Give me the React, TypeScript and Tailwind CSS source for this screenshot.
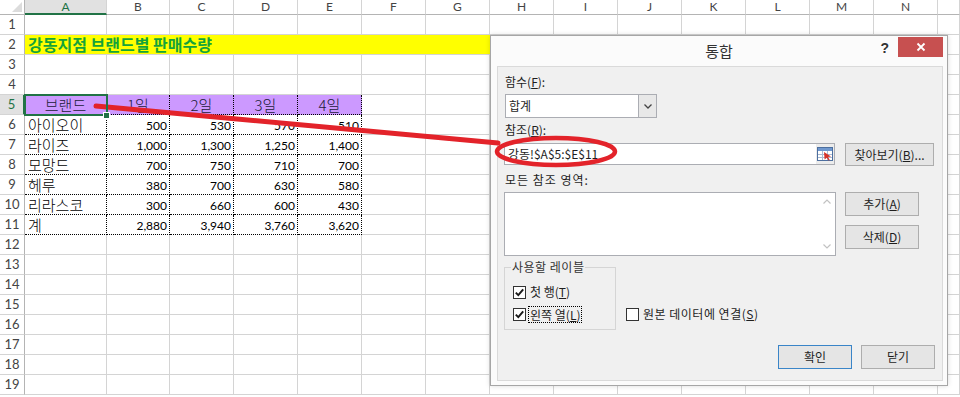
import React from 'react';

const colLetters = ['A', 'B', 'C', 'D', 'E', 'F', 'G', 'H', 'I', 'J', 'K', 'L', 'M', 'N', ''];

const data: string[][] = [
  ['아이오이', '500', '530', '570', '510'],
  ['라이즈', '1,000', '1,300', '1,250', '1,400'],
  ['모망드', '700', '750', '710', '700'],
  ['헤루', '380', '700', '630', '580'],
  ['리라스코', '300', '660', '600', '430'],
  ['계', '2,880', '3,940', '3,760', '3,620'],
];

const grid = 'border-r border-b border-[#d4d4d4]';
const dotted = 'border-r border-b border-dotted border-black';

const RowHead = ({ n, active }: { n: number; active?: boolean }) =>
  active ? (
    <div className="border-b border-[#d4d4d4] border-r-2 border-r-[#217346] bg-[#e1e1e1] text-[#217346] text-[13px] flex items-center justify-center">
      {n}
    </div>
  ) : (
    <div className="border-b border-[#d4d4d4] border-r border-r-[#b4b4b4] text-[#444] text-[13px] flex items-center justify-center">
      {n}
    </div>
  );

const Blanks = ({ count }: { count: number }) => (
  <>
    {Array.from({ length: count }).map((_, i) => (
      <div key={i} className={grid} />
    ))}
  </>
);

const Check = ({ on }: { on?: boolean }) => (
  <span className="w-[13px] h-[13px] border border-[#333] bg-white flex items-center justify-center shrink-0">
    {on && (
      <svg width="11" height="11" viewBox="0 0 11 11">
        <path d="M1.8 5.6 L4.3 8.2 L9.2 2.4" fill="none" stroke="#1a1a1a" strokeWidth="1.9" />
      </svg>
    )}
  </span>
);

const Btn = ({ children, primary }: { children: React.ReactNode; primary?: boolean }) => (
  <div
    className={
      primary
        ? 'w-[74px] h-[24px] border border-[#3a85c8] bg-[#e5e5e5] flex items-center justify-center text-[12px] text-[#1e1e1e]'
        : 'w-[74px] h-[24px] border border-[#adadad] bg-[#e5e5e5] flex items-center justify-center text-[12px] text-[#1e1e1e]'
    }
  >
    {children}
  </div>
);

const Sheet = () => (
  <div className="grid grid-cols-[25px_82px_63px_64px_64px_64px_64px_64px_64px_64px_64px_64px_64px_64px_64px_22px] grid-rows-[15px_repeat(19,20px)] font-['Lato','Noto_Sans_CJK_KR',sans-serif]">
    {/* header row */}
    <div className="border-r border-b border-[#b4b4b4] flex items-end justify-end p-[2px]">
      <svg width="10" height="10" viewBox="0 0 10 10">
        <polygon points="10,0 10,10 0,10" fill="#dcdcdc" />
      </svg>
    </div>
    {colLetters.map((c, i) =>
      i === 0 ? (
        <div key={c} className="border-r border-[#d4d4d4] border-b-2 border-b-[#217346] bg-[#e1e1e1] text-[#217346] text-[12px] flex items-center justify-center leading-[13px]">
          {c}
        </div>
      ) : (
        <div key={i} className="border-r border-[#d4d4d4] border-b border-b-[#b4b4b4] text-[#444] text-[12px] flex items-center justify-center leading-[14px]">
          {c}
        </div>
      )
    )}

    {/* row 1 */}
    <RowHead n={1} />
    <Blanks count={15} />

    {/* row 2 */}
    <RowHead n={2} />
    <div className="col-span-7 bg-[#ffff00] border-b border-[#d4d4d4] flex items-end pl-[3px] font-['Noto_Sans_CJK_KR',sans-serif] font-bold text-[16px] leading-[19px] text-[#14a33a] whitespace-nowrap">
      강동지점 브랜드별 판매수량
    </div>
    <Blanks count={8} />

    <RowHead n={3} />
    <Blanks count={15} />
    <RowHead n={4} />
    <Blanks count={15} />

    {/* row 5 */}
    <RowHead n={5} active />
    <div className={`${dotted} relative bg-[#cc99ff] flex items-end justify-center font-['Noto_Sans_CJK_KR',sans-serif] font-light text-[15px] leading-[18px] text-[#1b1b3a]`}>
      브랜드
      <div className="absolute left-[-1px] top-[-1px] w-[84px] h-[22px] border-2 border-[#217346] z-10" />
      <div className="absolute right-[-4px] bottom-[-5px] w-[7px] h-[7px] bg-[#217346] border border-white z-10" />
    </div>
    {['1일', '2일', '3일', '4일'].map((d) => (
      <div key={d} className={`${dotted} bg-[#cc99ff] flex items-end justify-center font-['Noto_Sans_CJK_KR',sans-serif] font-light text-[15px] leading-[18px] text-[#1b1b3a]`}>
        {d}
      </div>
    ))}
    <Blanks count={10} />

    {/* rows 6-11 */}
    {data.map((r, i) => (
      <React.Fragment key={r[0]}>
        <RowHead n={6 + i} />
        <div className={`${dotted} flex items-end pl-[3px] font-['Noto_Sans_CJK_KR',sans-serif] font-light text-[15px] leading-[18px] text-black whitespace-nowrap`}>
          {r[0]}
        </div>
        {r.slice(1).map((v, j) => (
          <div key={j} className={`${dotted} flex items-end justify-end pr-[2px] text-[12px] leading-[17px] text-black`}>
            {v}
          </div>
        ))}
        <Blanks count={10} />
      </React.Fragment>
    ))}

    {[12, 13, 14, 15, 16, 17, 18, 19].map((n) => (
      <React.Fragment key={n}>
        <RowHead n={n} />
        <Blanks count={15} />
      </React.Fragment>
    ))}
  </div>
);

const RefIcon = () => (
  <svg width="16" height="14" viewBox="0 0 16 14">
    <rect x="0.5" y="0.5" width="15" height="13" fill="#ffffff" stroke="#4d6f9f" />
    <rect x="1" y="1" width="14" height="3" fill="#7098cf" />
    <line x1="1" y1="7.5" x2="15" y2="7.5" stroke="#a9bbd4" />
    <line x1="1" y1="10.5" x2="15" y2="10.5" stroke="#a9bbd4" />
    <line x1="5.5" y1="4" x2="5.5" y2="13" stroke="#a9bbd4" />
    <line x1="10.5" y1="4" x2="10.5" y2="13" stroke="#a9bbd4" />
    <polygon points="7,5 14,9.5 11,10 12.8,13 11.6,13.6 9.8,10.7 7.6,12.5" fill="#d6332a" />
  </svg>
);

const Dialog = () => (
  <div className="absolute left-[490px] top-[35px] w-[458px] h-[351px] border border-[#a6a6a6] bg-[#fbfbfb] flex flex-col shadow-[0_0_5px_rgba(0,0,0,0.15)] font-['Noto_Sans_CJK_KR',sans-serif] text-[#1e1e1e]">
    <div className="h-[30px] grid grid-cols-[1fr_auto_1fr]">
      <div />
      <div className="flex items-center text-[15px] text-[#333]">통합</div>
      <div className="flex justify-end items-start pr-[4px] pt-[1px] gap-[9px]">
        <span className="mt-[1px] text-[14px] font-bold text-[#333] font-['Liberation_Sans',sans-serif]">?</span>
        <div className="w-[45px] h-[20px] bg-[#c75050] flex items-center justify-center">
          <svg width="10" height="10" viewBox="0 0 10 10">
            <path d="M1.5 1.5 L8.5 8.5 M8.5 1.5 L1.5 8.5" stroke="#ffffff" strokeWidth="1.8" />
          </svg>
        </div>
      </div>
    </div>

    <div className="flex-1 ml-[6px] mr-[4px] mb-[4px] bg-[#f0f0f0] border border-[#dadada] flex flex-col text-[12px]">
      <div className="ml-[7px] mt-[7px] leading-[16px]">
        함수(<span className="underline">F</span>):
      </div>
      <div className="ml-[7px] mt-[4px] w-[152px] h-[24px] border border-[#abadb3] bg-white flex">
        <div className="flex-1 flex items-center pl-[3px]">합계</div>
        <div className="w-[18px] border-l border-[#abadb3] bg-[#e8e8e8] flex items-center justify-center">
          <svg width="8" height="5" viewBox="0 0 8 5">
            <path d="M0.5 0.5 L4 4 L7.5 0.5" fill="none" stroke="#444" strokeWidth="1.3" />
          </svg>
        </div>
      </div>

      <div className="ml-[7px] mt-[4px] leading-[16px]">
        참조(<span className="underline">R</span>):
      </div>
      <div className="ml-[6px] mt-[5px] flex items-start">
        <div className="w-[331px] h-[22px] border border-[#abadb3] bg-white flex">
          <div className="flex-1 flex items-center pl-[3px]">강동!$A$5:$E$11</div>
          <div className="w-[18px] bg-[#ececec] flex items-center justify-center">
            <RefIcon />
          </div>
        </div>
        <div className="ml-[10px] w-[89px] h-[23px] border border-[#adadad] bg-[#e5e5e5] flex items-center justify-center">
          찾아보기(<span className="underline">B</span>)...
        </div>
      </div>

      <div className="ml-[7px] mt-[6px] leading-[16px] tracking-[1px]">모든 참조 영역:</div>
      <div className="ml-[6px] mt-[4px] flex items-start">
        <div className="w-[332px] h-[64px] border border-[#abadb3] bg-white flex justify-end">
          <div className="w-[17px] flex flex-col justify-between items-center py-[6px]">
            <svg width="8" height="5" viewBox="0 0 8 5">
              <path d="M0.5 4.5 L4 1 L7.5 4.5" fill="none" stroke="#c2c2c2" strokeWidth="1.2" />
            </svg>
            <svg width="8" height="5" viewBox="0 0 8 5">
              <path d="M0.5 0.5 L4 4 L7.5 0.5" fill="none" stroke="#c2c2c2" strokeWidth="1.2" />
            </svg>
          </div>
        </div>
        <div className="ml-[9px] flex flex-col gap-[9px]">
          <Btn>
            추가(<span className="underline">A</span>)
          </Btn>
          <Btn>
            삭제(<span className="underline">D</span>)
          </Btn>
        </div>
      </div>

      <div className="ml-[6px] mt-[3px] flex items-end">
        <fieldset className="w-[112px] border border-[#d5d5d5] pl-[8px] pb-[7px]">
          <legend className="ml-[-2px] px-[1px] leading-[16px] text-[#333] tracking-[0.5px]">사용할 레이블</legend>
          <div className="mt-[9px] h-[16px] flex items-center gap-[4px]">
            <Check on />
            <span>
              첫 행(<span className="underline">T</span>)
            </span>
          </div>
          <div className="mt-[6px] h-[16px] flex items-center gap-[2px]">
            <Check on />
            <span className="border border-dotted border-black px-[1px] leading-[15px]">
              왼쪽 열(<span className="underline">L</span>)
            </span>
          </div>
        </fieldset>
        <div className="ml-[10px] mb-[8px] h-[16px] flex items-center gap-[4px]">
          <Check />
          <span className="tracking-[0.5px]">
            원본 데이터에 연결(<span className="underline">S</span>)
          </span>
        </div>
      </div>

      <div className="mt-[15px] flex justify-end pr-[7px] gap-[9px]">
        <Btn primary>확인</Btn>
        <Btn>닫기</Btn>
      </div>
    </div>
  </div>
);

const App = () => {
  return (
    <div className="relative w-[960px] h-[397px] overflow-hidden bg-white">
      <Sheet />
      <Dialog />
      {/* red annotation */}
      <svg className="absolute left-0 top-0 pointer-events-none" width="960" height="397">
        <line x1="96" y1="106" x2="498" y2="143" stroke="#e3232a" strokeWidth="5" strokeLinecap="round" />
        <ellipse cx="556" cy="151.5" rx="59" ry="13.5" fill="none" stroke="#e3232a" strokeWidth="4.5" />
      </svg>
    </div>
  );
};

export default App;
